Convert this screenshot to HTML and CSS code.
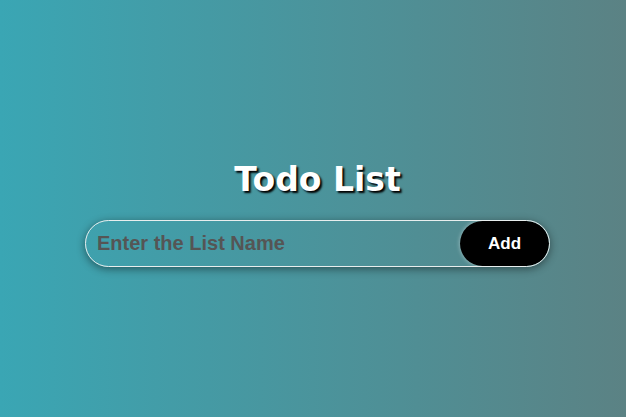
FILE: index.html
```html
<!DOCTYPE html>
<html>
<head>
<meta charset="utf-8">
<link rel="stylesheet" href="styles.css">
</head>
<body>
<main class="app">
  <h1 class="title">Todo List</h1>
  <form class="add-form">
    <input class="list-input" type="text" placeholder="Enter the List Name">
    <button class="add-btn" type="button">Add</button>
  </form>
</main>
</body>
</html>
```
FILE: styles.css
```css
html, body {
  margin: 0;
  height: 100%;
}
body {
  background: linear-gradient(to right, #3aa6b4, #5b8284);
  font-family: "Liberation Sans", Arial, sans-serif;
}
.app {
  display: flex;
  flex-direction: column;
  align-items: center;
  padding-top: 157px;
  padding-left: 9px;
}
.title {
  margin: 0;
  font-family: "DejaVu Sans", Verdana, sans-serif;
  font-weight: bold;
  font-size: 33px;
  line-height: 45px;
  color: #fff;
  text-shadow: 2px 2px 2px #000;
}
.add-form {
  margin-top: 18px;
  width: 465px;
  height: 47px;
  box-sizing: border-box;
  display: flex;
  border: 1px solid #e8eeee;
  border-radius: 24px;
  box-shadow: 0 2px 8px rgba(0,0,0,0.45);
  overflow: hidden;
}
.list-input {
  flex: 1;
  min-width: 0;
  background: transparent;
  border: none;
  outline: none;
  padding: 0 0 0 11px;
  font-family: "Liberation Sans", Arial, sans-serif;
  font-weight: bold;
  font-size: 20px;
  color: #555;
}
.list-input::placeholder {
  color: #555;
}
.add-btn {
  width: 89px;
  border: none;
  border-radius: 24px;
  background: #000;
  color: #fff;
  font-family: "Liberation Sans", Arial, sans-serif;
  font-weight: bold;
  font-size: 17px;
  box-shadow: 0 0 4px rgba(255,255,255,0.5);
  cursor: pointer;
}
```
